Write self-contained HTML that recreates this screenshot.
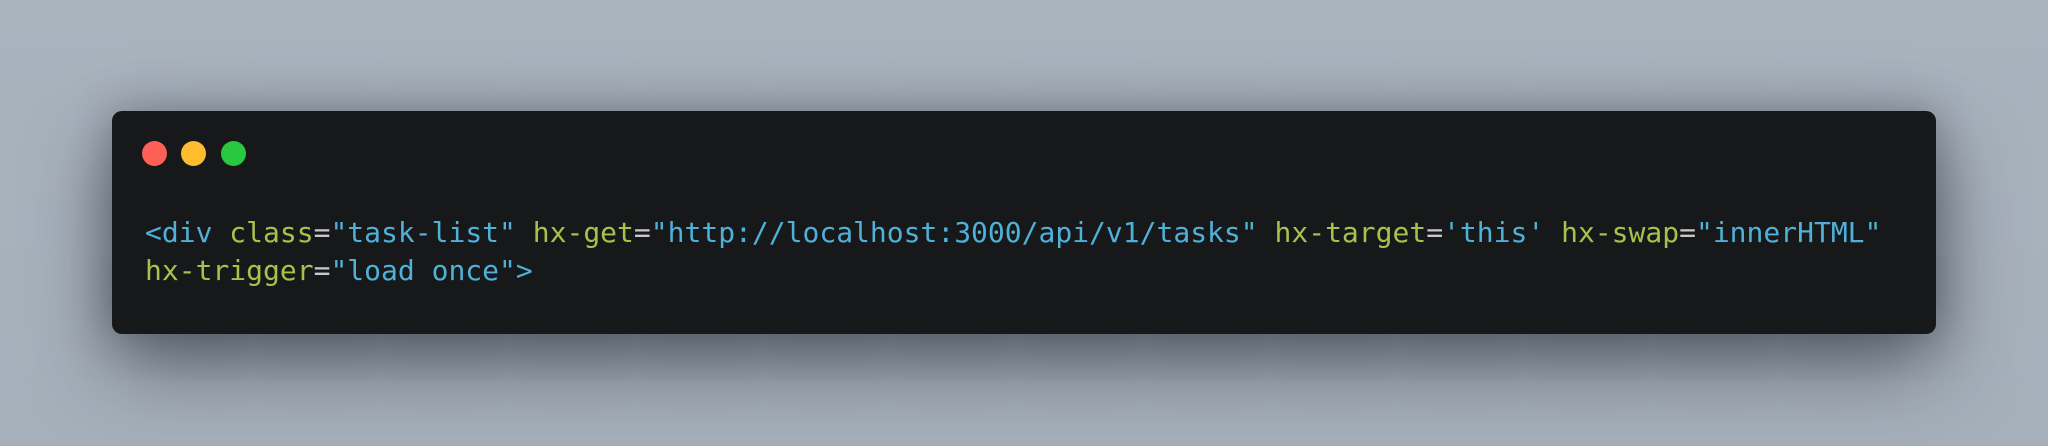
<!DOCTYPE html>
<html><head><meta charset="utf-8"><style>
html,body{margin:0;padding:0;width:2048px;height:446px;overflow:hidden;}
body{background:linear-gradient(180deg,#a9b3be 0%,#a6b0bb 100%);position:relative;font-family:"DejaVu Sans Mono","Liberation Mono",monospace;}
.win{position:absolute;left:112px;top:111px;width:1824px;height:223px;background:#17181a;border-radius:10px;box-shadow:0 30px 80px rgba(30,35,45,0.6),0 0 40px rgba(30,35,45,0.3);}
.dot{position:absolute;top:141px;width:25px;height:25px;border-radius:50%;}
pre{position:absolute;left:145px;top:214px;margin:0;font-family:"DejaVu Sans Mono",monospace;font-size:28px;line-height:37.5px;color:#cfcfcf;letter-spacing:0px;}
.b{color:#4fb0d8}.g{color:#a6c24c}.e{color:#c8c8c8}
</style></head><body>
<div class="win"></div>
<div class="dot" style="left:142px;background:#fe5f57"></div>
<div class="dot" style="left:181px;background:#febc2e"></div>
<div class="dot" style="left:221px;background:#28c840"></div>
<pre><span class="b">&lt;div</span> <span class="g">class</span><span class="e">=</span><span class="b">"task-list"</span> <span class="g">hx-get</span><span class="e">=</span><span class="b">"http://localhost:3000/api/v1/tasks"</span> <span class="g">hx-target</span><span class="e">=</span><span class="b">'this'</span> <span class="g">hx-swap</span><span class="e">=</span><span class="b">"innerHTML"</span>
<span class="g">hx-trigger</span><span class="e">=</span><span class="b">"load once"&gt;</span></pre>
</body></html>
